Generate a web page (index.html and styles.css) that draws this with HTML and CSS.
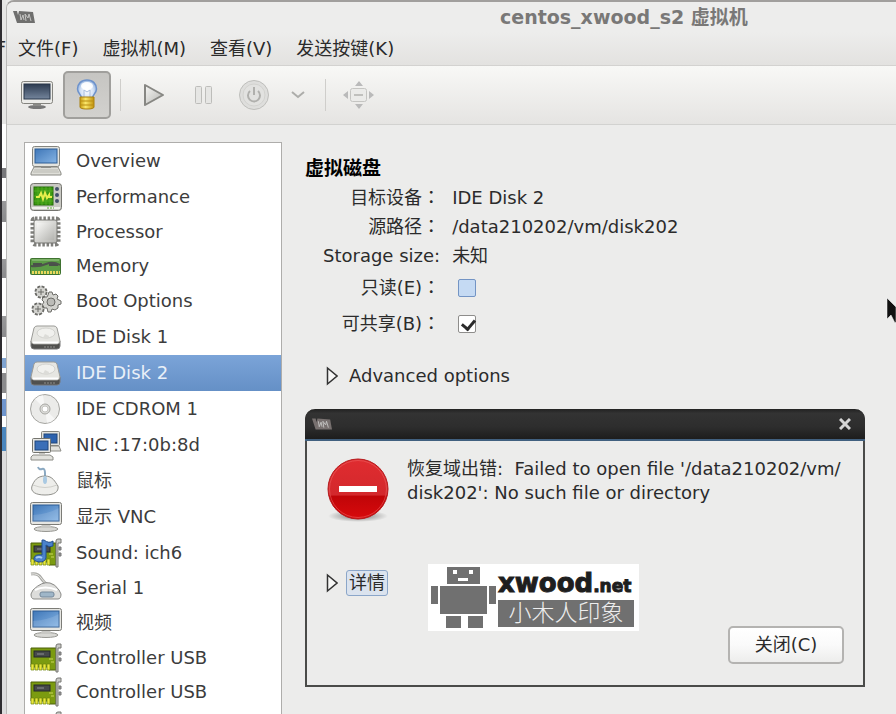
FILE: index.html
```html
<!DOCTYPE html>
<html lang="zh-CN">
<head>
    <meta charset="UTF-8">
    <meta name="viewport" content="width=device-width, initial-scale=1.0">
    <title>centos_xwood_s2 虚拟机</title>
    <link rel="stylesheet" href="styles.css">
</head>
<body>
    <!-- Icon definitions -->
    <svg class="defs" width="0" height="0" aria-hidden="true">
        <defs>
            <linearGradient id="screenBlue" x1="0" y1="0" x2="1" y2="1">
                <stop offset="0" stop-color="#3f77b8"/>
                <stop offset="1" stop-color="#86b4e4"/>
            </linearGradient>
            <linearGradient id="screenDark" x1="0" y1="0" x2="0" y2="1">
                <stop offset="0" stop-color="#2c3b50"/>
                <stop offset="1" stop-color="#74859c"/>
            </linearGradient>
            <linearGradient id="metal" x1="0" y1="0" x2="1" y2="1">
                <stop offset="0" stop-color="#f7f7f5"/>
                <stop offset="1" stop-color="#b4b4b0"/>
            </linearGradient>
            <linearGradient id="brass" x1="0" y1="0" x2="1" y2="0">
                <stop offset="0" stop-color="#c79a10"/>
                <stop offset="0.4" stop-color="#fbe76a"/>
                <stop offset="1" stop-color="#c2920c"/>
            </linearGradient>
            <radialGradient id="glass" cx="0.5" cy="0.55" r="0.55">
                <stop offset="0" stop-color="#ffffff"/>
                <stop offset="0.6" stop-color="#d5e3f6"/>
                <stop offset="1" stop-color="#8fb0de"/>
            </radialGradient>
            <linearGradient id="red" x1="0" y1="0" x2="0" y2="1">
                <stop offset="0" stop-color="#e02c30"/>
                <stop offset="0.6" stop-color="#d3282c"/>
                <stop offset="0.62" stop-color="#c00508"/>
                <stop offset="1" stop-color="#d80a0c"/>
            </linearGradient>
            <radialGradient id="shade">
                <stop offset="0" stop-color="#000" stop-opacity="0.5"/>
                <stop offset="1" stop-color="#000" stop-opacity="0"/>
            </radialGradient>

            <symbol id="computer" viewBox="0 0 32 32">
                <path d="M4 22h24l3 6v2H1v-2z" fill="#deded8" stroke="#8a8a84"/>
                <path d="M4 25h24M3 27h26" stroke="#b9b9b2"/>
                <rect x="2.500" y="1.500" width="27" height="20" rx="2" fill="#e4e4df" stroke="#85857f"/>
                <rect x="5" y="4" width="22" height="14" fill="url(#screenBlue)" stroke="#2d5c96"/>
                <path d="M11 21h10v2H11z" fill="#8d8d88"/>
            </symbol>

            <symbol id="display" viewBox="0 0 32 32">
                <ellipse cx="16" cy="28" rx="12" ry="2.500" fill="#d8d8d4" stroke="#979792"/>
                <path d="M12 22h8l1 5H11z" fill="#c8c8c4"/>
                <rect x="0.500" y="1.500" width="31" height="22" rx="2" fill="#e6e6e2" stroke="#7c7c77"/>
                <rect x="3" y="4" width="26" height="16" fill="url(#screenBlue)" stroke="#2d5c96"/>
                <path d="M3 14Q18 13 29 7v13H3z" fill="#fff" opacity="0.12"/>
            </symbol>

            <symbol id="performance" viewBox="0 0 32 32">
                <rect x="0.500" y="2.500" width="31" height="27" rx="3" fill="#c9c9c3" stroke="#74746f"/>
                <path d="M2 27h28" stroke="#f0f0ec" stroke-width="2"/>
                <rect x="4" y="6" width="19" height="18" fill="#3c9a12" stroke="#236c06"/>
                <path d="M8 6v18M12 6v18M16 6v18M20 6v18M4 10h19M4 15h19M4 20h19" stroke="#5cb32c" stroke-width="0.700"/>
                <path d="M6 16h3l2-4 2 6 2-6 2 5 2-3v2h3" fill="none" stroke="#e6ee4c" stroke-width="2"/>
                <g fill="#41506a"><circle cx="27" cy="8" r="2"/><circle cx="27" cy="14" r="2"/><circle cx="27" cy="20" r="2"/></g>
                <path d="M17 27h7" stroke="#5aa837" stroke-dasharray="2 1"/>
            </symbol>

            <symbol id="processor" viewBox="0 0 32 32">
                <rect x="3" y="3" width="25" height="25" rx="2" fill="none" stroke="#7f7f7b" stroke-width="5" stroke-dasharray="2.500 1.700"/>
                <rect x="4" y="4" width="23" height="23" rx="2" fill="url(#metal)" stroke="#777773"/>
                <rect x="7" y="7" width="17" height="17" fill="url(#metal)"/>
            </symbol>

            <symbol id="memory" viewBox="0 0 32 32">
                <rect x="0.500" y="8.500" width="30" height="16" rx="1" fill="#5c9c46" stroke="#3f7330"/>
                <path d="M2 10h27" stroke="#9bc788"/>
                <path d="M3 13h9v3H3zM19 13h9v3h-9z" fill="#4a504a"/>
                <path d="M1 16q8 1 15-2t14 1" fill="none" stroke="#4d534c" stroke-width="2"/>
                <path d="M2 22.500h28" stroke="#e9d85c" stroke-width="3" stroke-dasharray="2 1"/>
            </symbol>

            <symbol id="gears" viewBox="0 0 32 32">
                <g fill="#d3d3cf" stroke="#6b6b67">
                    <path d="M19 7l3 0 1 3 3-1 2 2-1 3 4 2v3l-3 1 0 3-3 2-3-1-1 3h-3l-1-4-3 0-2-3 2-3-2-2 1-3 4 0 1-2z"/>
                    <circle cx="21" cy="17" r="4" fill="#bcbcb8"/>
                    <circle cx="11" cy="7" r="5.500" stroke-width="2" stroke-dasharray="3 1.300"/>
                    <circle cx="11" cy="7" r="4.500" stroke="none"/>
                    <path d="M11 4v6M8 7h6"/>
                    <circle cx="8" cy="24" r="5.500" stroke-width="2" stroke-dasharray="3 1.300"/>
                    <circle cx="8" cy="24" r="4.500" stroke="none"/>
                    <path d="M8 21v6M5 24h6"/>
                </g>
            </symbol>

            <symbol id="disk" viewBox="0 0 32 32">
                <path d="M1 20v5q0 3 3 3h23q3 0 3-3v-5z" fill="#50504e" stroke="#777"/>
                <path d="M4 7q1-2 3-2h17q2 0 3 2l3 13q0 3-3 3H4q-3 0-3-3z" fill="#e6e6e2" stroke="#9b9b97"/>
                <ellipse cx="16" cy="12" rx="9" ry="5" fill="#f1f1ee" stroke="#d2d2ce"/>
                <path d="M13 17l2-4 4 2-1 3z" fill="#dcdcd8"/>
                <path d="M3 21.500h25" stroke="#fff" stroke-width="2"/>
                <path d="M14 26h12" stroke="#8e8e8b" stroke-dasharray="2 1"/>
            </symbol>

            <symbol id="cdrom" viewBox="0 0 32 32">
                <circle cx="15" cy="16" r="14.500" fill="#ebebe9" stroke="#a5a5a1"/>
                <path d="M15 16L5 6a14 14 0 0 1 8-4zM15 16l10 10a14 14 0 0 1-8 4z" fill="#fff" opacity="0.600"/>
                <circle cx="15" cy="16" r="5" fill="#dededb" stroke="#a6a6a2"/>
                <circle cx="15" cy="16" r="3" fill="#fff" stroke="#c4c4c0"/>
            </symbol>

            <symbol id="network" viewBox="0 0 32 32">
                <path d="M19 17h10l2 5H17z" fill="#e2e2dd" stroke="#8c8c86"/>
                <rect x="11.500" y="2.500" width="18" height="14" rx="1" fill="#e2e2dd" stroke="#85857f"/>
                <rect x="14" y="5" width="13" height="9" fill="#2c62ae" stroke="#1e467c"/>
                <path d="M3 26h17l3 2v3H1v-3z" fill="#e2e2dd" stroke="#8c8c86"/>
                <path d="M9 23h6v3H9z" fill="#c4c4bf"/>
                <rect x="2.500" y="9.500" width="18" height="14" rx="1" fill="#e8e8e4" stroke="#75756f"/>
                <rect x="5" y="12" width="13" height="9" fill="#3a6fb8" stroke="#1e467c"/>
            </symbol>

            <symbol id="mouse" viewBox="0 0 32 32">
                <path d="M8 2q1 3 4 2t3 4v5" fill="none" stroke="#8ba9c2" stroke-width="2"/>
                <path d="M15 11c8 0 10 6 13 10 1 6-4 9-13 9S0 27 2 21c2-5 5-10 13-10z" fill="#eeeeeb" stroke="#91918c"/>
                <path d="M3 20q12 5 24 0" fill="none" stroke="#cfcfca"/>
                <ellipse cx="15" cy="15" rx="2" ry="4" fill="#a9c9e2"/>
            </symbol>

            <symbol id="card" viewBox="0 0 32 32">
                <path d="M1 6h25v22H19v-3H1z" fill="#7b9b10" stroke="#4c6008"/>
                <path d="M1 28v-6h3v6zM5 28v-6h3v6zM9 28v-6h3v6zM13 28v-6h3v6zM17 28v-6h3v6z" fill="#e9e73c" stroke="#6d850c" stroke-width="0.700"/>
                <rect x="4" y="9" width="16" height="6" fill="#46494b" stroke="#25282a"/>
                <path d="M7 12h7" stroke="#8d9093"/>
                <path d="M19 17h4M21 20h3" stroke="#ccd85a"/>
                <path d="M31 2h-3q-2 0-2 2v26h2V6h3z" fill="#c9c9c6" stroke="#767672"/>
                <path d="M29 10h2v3h-2zM29 16h2v3h-2z" fill="#999" stroke="#777"/>
            </symbol>

            <symbol id="sound" viewBox="0 0 32 32">
                <use href="#card"/>
                <path d="M14 3q5 4 9 1v5q-4 2-7-1v13q-1 4-7 4-6-1-5-4 1-4 8-3V3z" fill="#4b82cc" stroke="#234e8e"/>
                <path d="M6 21q3-2 6 0" fill="none" stroke="#a8cdf6" stroke-width="2"/>
            </symbol>

            <symbol id="serial" viewBox="0 0 32 32">
                <path d="M1 2q7-1 10 4t9 8" fill="none" stroke="#a9a9a5" stroke-width="3"/>
                <path d="M1 2q7-1 10 4t9 8" fill="none" stroke="#e7e7e4"/>
                <path d="M3 18q9-9 17-7 5 1 9 7l2 4q0 5-3 5H4q-3 0-3-5z" fill="#dddddb" stroke="#8a8a87"/>
                <path d="M5 18q10-5 22 0" fill="none" stroke="#fff" stroke-width="2"/>
                <rect x="10" y="20" width="14" height="5" rx="2" fill="#9fb6c8" stroke="#74889a"/>
            </symbol>

            <symbol id="vm" viewBox="0 0 22 14">
                <path d="M0 1h4l1 4 1-4 14 1 2 11H4z" fill="currentColor"/>
                <path d="M7 4l1 6 2-5 1 5M13 11l-1-7 3 4 1-4 2 7" fill="none" stroke="#c5c5c3"/>
            </symbol>

            <symbol id="triangle" viewBox="0 0 12 20">
                <path d="M1.500 2v16L11 10z" fill="#f7f7f6" stroke="#333" stroke-width="1.500"/>
            </symbol>
        </defs>
    </svg>

    <div class="desktop">
        <div class="behind"><span>F</span></div>

        <div class="window">
            <header class="titlebar">
                <svg class="vm-icon"><use href="#vm"/></svg>
                <h1>centos_xwood_s2 虚拟机</h1>
            </header>

            <nav class="menubar">
                <button type="button">文件(F)</button>
                <button type="button">虚拟机(M)</button>
                <button type="button">查看(V)</button>
                <button type="button">发送按键(K)</button>
            </nav>

            <div class="toolbar">
                <button type="button" aria-label="Console">
                    <svg width="32" height="30" viewBox="0 0 32 30">
                        <ellipse cx="16" cy="27" rx="9" ry="2" fill="#777"/>
                        <path d="M12 22h8v4h-8z" fill="#8b8b88"/>
                        <rect x="0.500" y="1.500" width="31" height="22" rx="2" fill="#ecece9" stroke="#84847f"/>
                        <rect x="3" y="4" width="26" height="15" fill="url(#screenDark)" stroke="#28374a"/>
                    </svg>
                </button>
                <button type="button" class="pressed" aria-label="Details">
                    <svg width="22" height="32" viewBox="0 0 22 32">
                        <path d="M11 1c6 0 9.500 4 9.500 9 0 4-4 6-4 9v2h-11v-2c0-3-4-5-4-9 0-5 3.500-9 9.500-9z" fill="url(#glass)" stroke="#6d92cb" stroke-width="1.500"/>
                        <path d="M8 20V11l3 2 3-2v9" fill="none" stroke="#a9bedd"/>
                        <ellipse cx="11" cy="7" rx="6" ry="4" fill="#fff" opacity="0.900"/>
                        <path d="M4 18h14v10q0 2-7 2t-7-2z" fill="url(#brass)" stroke="#a98010"/>
                        <path d="M4 22h14M4 26h14" stroke="#b98d12"/>
                    </svg>
                </button>
                <span class="separator"></span>
                <button type="button" aria-label="Run">
                    <svg width="22" height="24" viewBox="0 0 22 24">
                        <path d="M2 2l18 10L2 22z" fill="url(#metal)" stroke="#878783" stroke-width="2" stroke-linejoin="round"/>
                    </svg>
                </button>
                <button type="button" aria-label="Pause">
                    <svg width="20" height="20" viewBox="0 0 20 20" fill="#e6e6e4" stroke="#bdbdba">
                        <rect x="1.500" y="1.500" width="6" height="17" rx="1"/>
                        <rect x="11.500" y="1.500" width="6" height="17" rx="1"/>
                    </svg>
                </button>
                <button type="button" aria-label="Shut down">
                    <svg width="32" height="32" viewBox="0 0 32 32" fill="none">
                        <circle cx="16" cy="16" r="14.500" fill="#dededc" stroke="#bebebb"/>
                        <circle cx="16" cy="16" r="11" fill="#e2e2e0" stroke="#d2d2cf"/>
                        <path d="M12 12a6 6 0 1 0 8 0M16 8v8" stroke="#b0b0ad" stroke-width="2"/>
                    </svg>
                </button>
                <button type="button" class="narrow" aria-label="Shut down options">
                    <svg width="14" height="10" viewBox="0 0 14 10">
                        <path d="M1 2l6 5 6-5" fill="none" stroke="#adadaa" stroke-width="2"/>
                    </svg>
                </button>
                <span class="separator"></span>
                <button type="button" aria-label="Fullscreen">
                    <svg width="32" height="28" viewBox="0 0 32 28">
                        <rect x="7.500" y="7.500" width="16" height="13" rx="2" fill="#ebebe9" stroke="#c5c5c2"/>
                        <path d="M11 14h9" stroke="#c0c0bd" stroke-width="2"/>
                        <path d="M16 0l4 5h-8zM16 28l4-5h-8zM0 14l5-4v8zM31 14l-5-4v8z" fill="#bababa"/>
                    </svg>
                </button>
            </div>

            <div class="content">
                <nav class="hardware">
                    <a href="#"><svg><use href="#computer"/></svg>Overview</a>
                    <a href="#"><svg><use href="#performance"/></svg>Performance</a>
                    <a href="#" class="short"><svg><use href="#processor"/></svg>Processor</a>
                    <a href="#" class="short"><svg><use href="#memory"/></svg>Memory</a>
                    <a href="#"><svg><use href="#gears"/></svg>Boot Options</a>
                    <a href="#"><svg><use href="#disk"/></svg>IDE Disk 1</a>
                    <a href="#" class="selected"><svg><use href="#disk"/></svg>IDE Disk 2</a>
                    <a href="#"><svg><use href="#cdrom"/></svg>IDE CDROM 1</a>
                    <a href="#"><svg><use href="#network"/></svg>NIC :17:0b:8d</a>
                    <a href="#"><svg><use href="#mouse"/></svg>鼠标</a>
                    <a href="#"><svg><use href="#display"/></svg>显示 VNC</a>
                    <a href="#"><svg><use href="#sound"/></svg>Sound: ich6</a>
                    <a href="#" class="short"><svg><use href="#serial"/></svg>Serial 1</a>
                    <a href="#"><svg><use href="#display"/></svg>视频</a>
                    <a href="#" class="short"><svg><use href="#card"/></svg>Controller USB</a>
                    <a href="#" class="short"><svg><use href="#card"/></svg>Controller USB</a>
                    <a href="#" class="short" aria-label="Controller USB"><svg><use href="#card"/></svg></a>
                </nav>

                <main class="details">
                    <h2>虚拟磁盘</h2>
                    <div class="fields">
                        <span class="label">目标设备<span lang="zh-TW">：</span></span>
                        <span>IDE Disk 2</span>
                        <span class="label">源路径<span lang="zh-TW">：</span></span>
                        <span>/data210202/vm/disk202</span>
                        <span class="label">Storage size:</span>
                        <span>未知</span>
                        <label class="label tall" for="readonly">只读(E)<span lang="zh-TW">：</span></label>
                        <input type="checkbox" id="readonly" class="highlight">
                        <label class="label tall" for="shareable">可共享(B)<span lang="zh-TW">：</span></label>
                        <input type="checkbox" id="shareable" checked>
                    </div>
                    <button type="button" class="expander advanced">
                        <svg><use href="#triangle"/></svg>
                        <span>Advanced options</span>
                    </button>

                    <!-- Error dialog -->
                    <div class="dialog" role="alertdialog" aria-labelledby="errorText">
                        <div class="dialog-title">
                            <svg class="vm-icon"><use href="#vm"/></svg>
                            <button type="button" class="close-x" aria-label="关闭">
                                <svg width="12" height="12" viewBox="0 0 12 12">
                                    <path d="M1 1l10 10M11 1L1 11" stroke="#d6d6d6" stroke-width="3"/>
                                </svg>
                            </button>
                        </div>
                        <div class="dialog-body">
                            <div class="message">
                                <svg width="64" height="66" viewBox="0 0 64 66">
                                    <ellipse cx="32" cy="59" rx="30" ry="6" fill="url(#shade)"/>
                                    <circle cx="32" cy="32" r="30" fill="url(#red)" stroke="#b51a1c"/>
                                    <circle cx="32" cy="32" r="28.500" fill="none" stroke="#f06a6a" opacity="0.500"/>
                                    <rect x="13" y="29" width="38" height="6" fill="#fff"/>
                                </svg>
                                <p id="errorText">恢复域出错:&nbsp; Failed to open file '/data210202/vm/<wbr>disk202': No such file or directory</p>
                            </div>
                            <div class="actions">
                                <button type="button" class="expander more">
                                    <svg><use href="#triangle"/></svg>
                                    <span class="focus">详情</span>
                                </button>
                                <div class="logo">
                                    <svg width="66" height="63" viewBox="0 0 66 63" fill="#707070">
                                        <path d="M17 1h33v17H17zM10 20h47v28H10zM1 20h7v18H1zM59 20h7v18h-7zM16 50h15v12H16zM38 50h15v12H38z"/>
                                        <path d="M23 4h4v4h-4zM39 4h4v4h-4zM28 12h10v3H28z" fill="#fff"/>
                                    </svg>
                                    <div class="logo-text">
                                        <strong>xwood<small>.net</small></strong>
                                        <span>小木人印象</span>
                                    </div>
                                </div>
                                <button type="button" class="close-btn">关闭(C)</button>
                            </div>
                        </div>
                    </div>
                </main>
            </div>
        </div>

        <svg class="pointer" width="10" height="28" viewBox="0 0 10 28">
            <path d="M1 1v21l4-4 4 8 1-1V10z" fill="#111" stroke="#fff" stroke-width="0.500"/>
        </svg>
    </div>
</body>
</html>
```

FILE: styles.css
```css
* {
    box-sizing: border-box;
}
body {
    margin: 0;
    font-family: "DejaVu Sans", "Noto Sans CJK SC", sans-serif;
    font-size: 18px;
    line-height: 24px;
    color: #2b2b2b;
    background-color: #ececeb;
}
button {
    font: inherit;
    color: inherit;
    background: none;
    border: none;
    padding: 0;
}
h1, h2, p {
    margin: 0;
}
.defs {
    position: absolute;
}
.desktop {
    position: relative;
    display: flex;
    height: 100vh;
    overflow: hidden;
}

/* Sliver of the window underneath */
.behind {
    flex: 0 0 6px;
    padding-top: 36px;
    overflow: hidden;
    border-left: 2px solid #2e2c30;
    background: linear-gradient(#e6e6e5 124px, #fff 124px, #fff 168px, #77777a 168px, #77777a 178px, #fff 178px, #fff 201px, #98989a 201px, #8a8a8c 222px, #fff 222px, #fff 259px, #98989a 259px, #8a8a8c 278px, #fff 278px, #fff 316px, #98989a 316px, #8a8a8c 337px, #fff 337px, #fff 358px, #7fa3d0 358px, #7fa3d0 368px, #fff 368px, #fff 373px, #8a8a8c 373px, #8a8a8c 393px, #fff 393px, #fff 399px, #6f95cd 399px, #6f95cd 416px, #fff 416px, #fff 427px, #4b86bd 427px, #4b86bd 451px, #dcdcdd 451px);
}
.behind span {
    float: right;
}
.window {
    flex: 1;
    min-width: 0;
    display: flex;
    flex-direction: column;
    border-top: 2px solid #a19f9d;
    border-left: 1px solid #b9b8b7;
    border-top-left-radius: 8px;
    background-color: #ececeb;
    overflow: hidden;
}

/* Title, menu and toolbar */
.titlebar {
    flex: 0 0 30px;
    display: flex;
    align-items: center;
    padding-left: 6px;
    background-color: #ededec;
}
.vm-icon {
    width: 22px;
    height: 14px;
    color: #6f6f6e;
}
.titlebar h1 {
    margin-left: 465px;
    font-size: 19px;
    white-space: nowrap;
    color: #797877;
}
.menubar {
    flex: 0 0 34px;
    display: flex;
    align-items: center;
    gap: 24px;
    padding-left: 11px;
    border-bottom: 1px solid #d3d2d0;
    background: linear-gradient(#ededec, #e3e2e0);
}
.toolbar {
    flex: 0 0 59px;
    display: flex;
    align-items: center;
    gap: 2px;
    padding-left: 6px;
    border-bottom: 1px solid #d2d2d0;
    background: linear-gradient(#f8f8f6, #e5e4e2);
}
.toolbar button {
    width: 48px;
    height: 48px;
    display: flex;
    align-items: center;
    justify-content: center;
    border-radius: 5px;
}
.toolbar .narrow {
    width: 36px;
}
.toolbar .pressed {
    border: 2px solid #a09f9c;
    background: linear-gradient(#c6c5c2, #d2d1ce);
}
.separator {
    width: 1px;
    height: 32px;
    margin: 0 7px;
    background-color: #cfcecb;
}

/* Hardware list */
.content {
    flex: 1;
    min-height: 0;
    display: flex;
    gap: 23px;
    padding: 17px 0 0 17px;
}
.hardware {
    flex: 0 0 258px;
    display: flex;
    flex-direction: column;
    overflow: hidden;
    border: 1px solid #aeadab;
    border-bottom: none;
    background-color: #fff;
}
.hardware a {
    flex: 0 0 36px;
    display: flex;
    align-items: center;
    gap: 14px;
    padding-left: 5px;
    color: #3c3c3c;
    text-decoration: none;
}
.hardware a.short {
    flex-basis: 34px;
}
.hardware a.selected {
    color: #e9f0f8;
    background: linear-gradient(#7ba4d8, #6590c6);
}
.hardware svg {
    width: 32px;
    height: 32px;
}

/* Disk details */
.details {
    position: relative;
    flex: 1;
    padding-top: 12px;
}
.details h2 {
    font-size: 19px;
    line-height: 29px;
    color: #000;
}
.fields {
    display: grid;
    grid-template-columns: max-content 1fr;
    column-gap: 12px;
    padding-left: 18px;
    line-height: 29px;
}
.label {
    text-align: right;
}
.label span {
    font-family: "Noto Sans CJK TC", sans-serif;
    line-height: 1;
}
.tall {
    line-height: 36px;
}
.fields input {
    appearance: none;
    align-self: center;
    width: 18px;
    height: 18px;
    margin: 0 0 0 6px;
    border: 1px solid #8e8d8b;
    border-radius: 2px;
    background-color: #fff;
}
.fields input.highlight {
    border-color: #7394c4;
    background-color: #c5daf3;
}
.fields input:checked::before {
    content: "";
    display: block;
    width: 6px;
    height: 10px;
    margin: 1px 0 0 5px;
    border: solid #2a2a2a;
    border-width: 0 3px 3px 0;
    transform: rotate(40deg);
}
.expander {
    display: flex;
    align-items: center;
    gap: 11px;
}
.expander svg {
    width: 12px;
    height: 20px;
}
.advanced {
    margin: 22px 0 0 21px;
}

/* Error dialog */
.dialog {
    position: absolute;
    top: 267px;
    left: 0;
    right: 31px;
    border: 2px solid #4a4b49;
    border-top: none;
    border-radius: 10px 10px 0 0;
    background-color: #ececeb;
}
.dialog-title {
    display: flex;
    align-items: center;
    justify-content: space-between;
    height: 32px;
    margin: 0 -2px;
    padding: 0 14px 0 7px;
    border-bottom: 2px solid #41607f;
    border-radius: 10px 10px 0 0;
    background: linear-gradient(#222, #333 15%, #2d2d2d 60%, #1d1d1d);
}
.dialog-title .vm-icon {
    width: 20px;
    color: #77706f;
}
.close-x {
    display: flex;
}
.dialog-body {
    padding: 16px 19px 21px 19px;
}
.message {
    display: flex;
    align-items: flex-start;
    gap: 17px;
}
.message svg {
    flex-shrink: 0;
}
.actions {
    display: flex;
    align-items: flex-start;
    height: 100px;
    margin-top: 41px;
}
.more {
    gap: 8px;
    margin-top: 6px;
}
.focus {
    padding: 0 2px;
    border: 1px solid #8ba6c9;
    border-radius: 3px;
    background-color: #dbe3ee;
}
.logo {
    display: flex;
    gap: 2px;
    height: 67px;
    margin-left: 40px;
    padding: 2px 5px 0 2px;
    background-color: #fff;
}
.logo-text {
    display: flex;
    flex-direction: column;
    justify-content: flex-end;
    width: 136px;
    padding-bottom: 4px;
}
.logo-text strong {
    font-size: 26px;
    line-height: 28px;
    color: #1e1e1e;
    -webkit-text-stroke: 1px #1e1e1e;
}
.logo-text small {
    font-size: 17px;
}
.logo-text span {
    font-size: 23px;
    font-weight: 300;
    line-height: 27px;
    text-align: center;
    color: #eee;
    background-color: #707070;
}
.close-btn {
    align-self: flex-end;
    width: 116px;
    height: 38px;
    margin-left: auto;
    border: 2px solid #b4b3b1;
    border-radius: 5px;
    background: linear-gradient(#fff, #fafafa 50%, #ededec);
}
.pointer {
    position: absolute;
    top: 297px;
    right: 0;
}
```
